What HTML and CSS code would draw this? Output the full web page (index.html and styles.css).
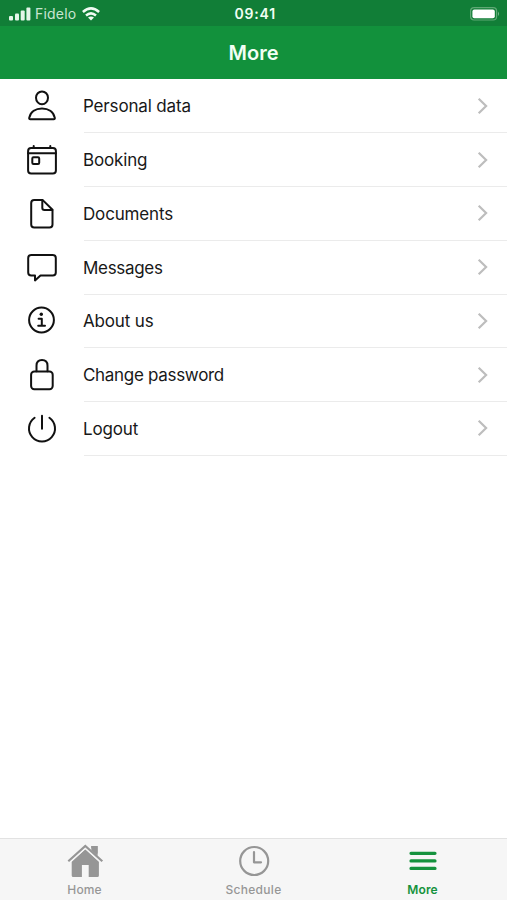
FILE: index.html
```html
<!DOCTYPE html>
<html lang="en">
<head>
<meta charset="utf-8">
<title>More</title>
<link rel="stylesheet" href="styles.css">
</head>
<body>
<div class="app">
  <div class="status">
    <div class="carrier">
      <svg width="22" height="14" viewBox="0 0 22 14" fill="#e4f5e9"><rect x="0" y="9" width="4" height="4.5" rx="1"/><rect x="6" y="6.5" width="4" height="7" rx="1"/><rect x="11.7" y="3.5" width="4" height="10" rx="1"/><rect x="17.4" y="0.5" width="4" height="13" rx="1"/></svg>
      <span class="name">Fidelo</span>
      <svg width="18" height="14" viewBox="0 0 18 14" fill="none" stroke="#f0fbf3" stroke-width="2.5"><path d="M.9 5Q9-2.2 17.1 5M4 8.5q5-4.3 10 0"/><path d="M9 13.6l-3-3q3-2.4 6 0z" fill="#f0fbf3" stroke="none"/></svg>
    </div>
    <div class="time">09:41</div>
    <svg class="battery" width="30" height="14" viewBox="0 0 30 14"><rect x=".6" y=".6" width="26" height="12.4" rx="3.5" fill="none" stroke="#5fa875" stroke-width="1.2"/><rect x="2.4" y="2.4" width="22.4" height="8.8" rx="2" fill="#fff"/><path d="M28 4.5q2 2.3 0 4.6z" fill="#79b98c"/></svg>
  </div>
  <header class="title">More</header>
  <main class="list">
    <div class="row">
      <svg class="icon" viewBox="0 0 32 32"><ellipse cx="16" cy="7.8" rx="6" ry="6.4"/><path d="M4.3 29.3h23.4q1.3 0 1.1-1.4C27.6 21.6 22.3 18.4 16 18.4S4.4 21.6 3.2 27.9q-.2 1.4 1.1 1.4z"/></svg>
      <div class="cell"><span>Personal data</span><svg class="chev" viewBox="0 0 12 18"><path d="M1.7 1.8L9.1 9 1.7 16.2"/></svg></div>
    </div>
    <div class="row">
      <svg class="icon" viewBox="0 0 32 32"><rect x="2.1" y="3.9" width="27.8" height="25.6" rx="3"/><path d="M2 9.2h28M7.7 2v2M24.3 2v2"/><rect x="6.3" y="13.3" width="6.9" height="6.7" rx="1.2"/></svg>
      <div class="cell"><span>Booking</span><svg class="chev" viewBox="0 0 12 18"><path d="M1.7 1.8L9.1 9 1.7 16.2"/></svg></div>
    </div>
    <div class="row">
      <svg class="icon" viewBox="0 0 32 32"><path d="M8.2 1.9h8.3l10 9.8v14.8q0 3-3 3H8.2q-3 0-3-3V4.9q0-3 3-3z"/><path d="M16.3 2v7.8q0 2.2 2.2 2.2h7.8"/></svg>
      <div class="cell"><span>Documents</span><svg class="chev" viewBox="0 0 12 18"><path d="M1.7 1.8L9.1 9 1.7 16.2"/></svg></div>
    </div>
    <div class="row">
      <svg class="icon" viewBox="0 0 32 32"><path d="M5.2 3h21.6q3 0 3 3v14.4q0 3-3 3H14.5L9 28.4v-5H5.2q-3 0-3-3V6q0-3 3-3z"/></svg>
      <div class="cell"><span class="tight">Messages</span><svg class="chev" viewBox="0 0 12 18"><path d="M1.7 1.8L9.1 9 1.7 16.2"/></svg></div>
    </div>
    <div class="row">
      <svg class="icon" viewBox="0 0 32 32"><circle cx="15.5" cy="15" r="12.4"/><circle cx="15.3" cy="9.3" r="1.7" fill="#111" stroke="none"/><path d="M12.6 13.8h3.2v7M12.2 20.8h6.8"/></svg>
      <div class="cell"><span>About us</span><svg class="chev" viewBox="0 0 12 18"><path d="M1.7 1.8L9.1 9 1.7 16.2"/></svg></div>
    </div>
    <div class="row">
      <svg class="icon" viewBox="0 0 32 32"><rect x="5.1" y="12.5" width="21.6" height="17.7" rx="3.2"/><path d="M10.5 12.3V6.7q0-5.6 5.5-5.6t5.5 5.6v5.6"/></svg>
      <div class="cell"><span class="tight">Change password</span><svg class="chev" viewBox="0 0 12 18"><path d="M1.7 1.8L9.1 9 1.7 16.2"/></svg></div>
    </div>
    <div class="row">
      <svg class="icon" viewBox="0 0 32 32"><path d="M8.6 4.8A13 13 0 1 0 23.4 4.8M16 2.8v13"/></svg>
      <div class="cell"><span>Logout</span><svg class="chev" viewBox="0 0 12 18"><path d="M1.7 1.8L9.1 9 1.7 16.2"/></svg></div>
    </div>
  </main>
  <nav class="tabs">
    <div class="tab">
      <svg width="38" height="34" viewBox="0 0 38 34"><path d="M5.7 17.8L19.3 5.2l13.6 12.6v13.7q0 1.5-1.5 1.5h-8.7V21h-6.8v12H7.2q-1.5 0-1.5-1.5z" fill="#969696"/><path d="M25.3 2h6.3v10l-6.3-5.8z" fill="#969696"/><path d="M2.3 17.2L19.3 2 36.3 17.2" fill="none" stroke="#f6f6f6" stroke-width="5"/><path d="M2.3 17.2L19.3 2 36.3 17.2" fill="none" stroke="#969696" stroke-width="2.2"/><path d="M25.3 2h6.3v10l-6.3-5.8z" fill="#969696"/></svg>
      <span>Home</span>
    </div>
    <div class="tab">
      <svg width="36" height="34" viewBox="0 0 36 34" fill="none" stroke="#969696" stroke-width="2.2" stroke-linecap="round" stroke-linejoin="round"><circle cx="18.2" cy="17" r="14"/><path d="M18 8v10.3h7"/></svg>
      <span class="wide">Schedule</span>
    </div>
    <div class="tab active">
      <svg width="36" height="34" viewBox="0 0 36 34" stroke="#15923d" stroke-width="3.2" stroke-linecap="round"><path d="M6 9.3h24M6 16.9h24M6 24.4h24"/></svg>
      <span>More</span>
    </div>
  </nav>
</div>
</body>
</html>
```
FILE: styles.css
```css
* { box-sizing: border-box; }
body { margin: 0; font-family: Inter, sans-serif; background: #fff; color: #181818; }
.app { width: 507px; height: 900px; display: flex; flex-direction: column; }
.status { height: 26px; background: #117e37; color: #f1fff4; display: grid; grid-template-columns: 1fr auto 1fr; align-items: center; padding: 1px 7px 0 9px; flex: none; }
.carrier { display: flex; align-items: center; gap: 4px; color: #c9e5d1; font-size: 14px; }
.name { width: 43px; letter-spacing: .2px; }
.time { font-size: 14px; font-weight: 600; letter-spacing: .8px; margin-right: -1.5px; }
.battery { justify-self: end; }
.title { height: 53px; flex: none; background: #12913c; color: #f1fff4; display: flex; align-items: center; justify-content: center; font-size: 20px; font-weight: 600; }
.list { flex: 1; padding-top: .5px; }
.row { height: 53.75px; display: flex; align-items: center; padding-left: 26px; }
.icon { width: 32px; height: 32px; margin-right: 26px; flex: none; fill: none; stroke: #111; stroke-width: 2; stroke-linecap: round; stroke-linejoin: round; }
.cell { flex: 1; height: 100%; display: flex; align-items: center; justify-content: space-between; padding-right: 18px; border-bottom: 1.5px solid #ebebeb; font-size: 17px; }
.cell span { margin-left: -1px; padding-top: 1px; letter-spacing: -.16px; }
.cell .tight { letter-spacing: -.31px; }
.chev { width: 12px; height: 18px; fill: none; stroke: #bdbdbd; stroke-width: 2.2; }
.tabs { height: 62px; flex: none; display: grid; grid-template-columns: repeat(3, 1fr); background: #f6f6f6; border-top: 1px solid #e2e2e2; }
.tab { display: flex; flex-direction: column; align-items: center; padding-top: 5px; color: #969696; font-size: 12px; font-weight: 500; line-height: 15px; }
.tab span { margin-top: 4px; letter-spacing: .1px; }
.tab .wide { letter-spacing: .3px; }
.active { color: #15923d; font-weight: 600; }
```
